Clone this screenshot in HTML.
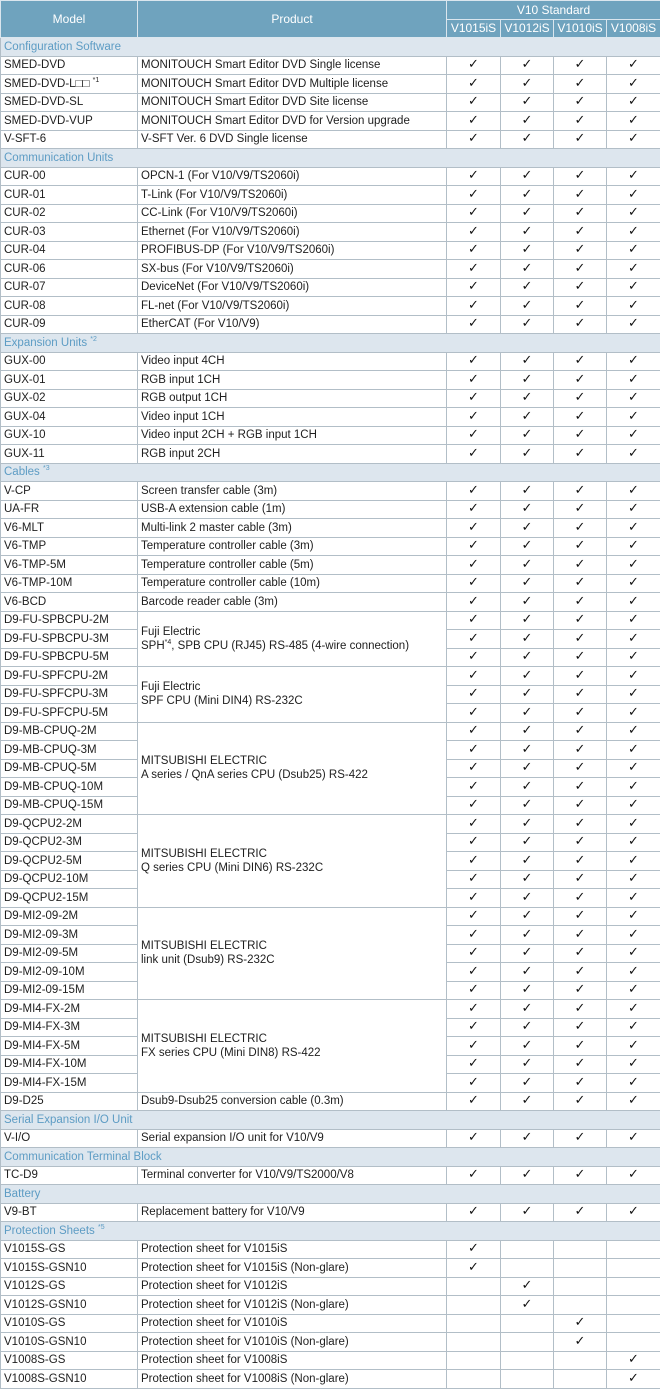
<!DOCTYPE html><html><head><meta charset="utf-8"><style>
body{margin:0;background:#fff;width:660px;height:1389px;overflow:hidden}
table{border-collapse:collapse;table-layout:fixed;width:660px;font-family:"Liberation Sans","DejaVu Sans",sans-serif;font-size:11.5px;color:#1e1e1e}
td,th{border:1px solid #b2bec7;padding:0 0 0 3px;height:17.5px;line-height:16px;white-space:nowrap;overflow:hidden}
th{background:#6fa3be;color:#fff;font-weight:normal;text-align:center;border-color:#dbe6ee;padding:0;font-size:12px}
tr.h td{background:#dde6ee;color:#5d9cc4;}
td.k{text-align:center;padding:0;font-family:"DejaVu Sans",sans-serif;font-size:13px;color:#111}
td.p{line-height:14px}
sup{font-size:7px;line-height:0}
</style></head><body><table>
<colgroup><col style="width:137px"><col style="width:309px"><col style="width:54px"><col style="width:53px"><col style="width:53px"><col style="width:54px"></colgroup>
<tr><th rowspan="2">Model</th><th rowspan="2">Product</th><th colspan="4">V10 Standard</th></tr>
<tr><th>V1015iS</th><th>V1012iS</th><th>V1010iS</th><th>V1008iS</th></tr>
<tr class="h"><td colspan="6">Configuration Software</td></tr>
<tr><td>SMED-DVD</td><td>MONITOUCH Smart Editor DVD Single license</td><td class="k">✓</td><td class="k">✓</td><td class="k">✓</td><td class="k">✓</td></tr>
<tr><td>SMED-DVD-L□□ <sup>*1</sup></td><td>MONITOUCH Smart Editor DVD Multiple license</td><td class="k">✓</td><td class="k">✓</td><td class="k">✓</td><td class="k">✓</td></tr>
<tr><td>SMED-DVD-SL</td><td>MONITOUCH Smart Editor DVD Site license</td><td class="k">✓</td><td class="k">✓</td><td class="k">✓</td><td class="k">✓</td></tr>
<tr><td>SMED-DVD-VUP</td><td>MONITOUCH Smart Editor DVD for Version upgrade</td><td class="k">✓</td><td class="k">✓</td><td class="k">✓</td><td class="k">✓</td></tr>
<tr><td>V-SFT-6</td><td>V-SFT Ver. 6 DVD Single license</td><td class="k">✓</td><td class="k">✓</td><td class="k">✓</td><td class="k">✓</td></tr>
<tr class="h"><td colspan="6">Communication Units</td></tr>
<tr><td>CUR-00</td><td>OPCN-1 (For V10/V9/TS2060i)</td><td class="k">✓</td><td class="k">✓</td><td class="k">✓</td><td class="k">✓</td></tr>
<tr><td>CUR-01</td><td>T-Link (For V10/V9/TS2060i)</td><td class="k">✓</td><td class="k">✓</td><td class="k">✓</td><td class="k">✓</td></tr>
<tr><td>CUR-02</td><td>CC-Link (For V10/V9/TS2060i)</td><td class="k">✓</td><td class="k">✓</td><td class="k">✓</td><td class="k">✓</td></tr>
<tr><td>CUR-03</td><td>Ethernet (For V10/V9/TS2060i)</td><td class="k">✓</td><td class="k">✓</td><td class="k">✓</td><td class="k">✓</td></tr>
<tr><td>CUR-04</td><td>PROFIBUS-DP (For V10/V9/TS2060i)</td><td class="k">✓</td><td class="k">✓</td><td class="k">✓</td><td class="k">✓</td></tr>
<tr><td>CUR-06</td><td>SX-bus (For V10/V9/TS2060i)</td><td class="k">✓</td><td class="k">✓</td><td class="k">✓</td><td class="k">✓</td></tr>
<tr><td>CUR-07</td><td>DeviceNet (For V10/V9/TS2060i)</td><td class="k">✓</td><td class="k">✓</td><td class="k">✓</td><td class="k">✓</td></tr>
<tr><td>CUR-08</td><td>FL-net (For V10/V9/TS2060i)</td><td class="k">✓</td><td class="k">✓</td><td class="k">✓</td><td class="k">✓</td></tr>
<tr><td>CUR-09</td><td>EtherCAT (For V10/V9)</td><td class="k">✓</td><td class="k">✓</td><td class="k">✓</td><td class="k">✓</td></tr>
<tr class="h"><td colspan="6">Expansion Units <sup>*2</sup></td></tr>
<tr><td>GUX-00</td><td>Video input 4CH</td><td class="k">✓</td><td class="k">✓</td><td class="k">✓</td><td class="k">✓</td></tr>
<tr><td>GUX-01</td><td>RGB input 1CH</td><td class="k">✓</td><td class="k">✓</td><td class="k">✓</td><td class="k">✓</td></tr>
<tr><td>GUX-02</td><td>RGB output 1CH</td><td class="k">✓</td><td class="k">✓</td><td class="k">✓</td><td class="k">✓</td></tr>
<tr><td>GUX-04</td><td>Video input 1CH</td><td class="k">✓</td><td class="k">✓</td><td class="k">✓</td><td class="k">✓</td></tr>
<tr><td>GUX-10</td><td>Video input 2CH + RGB input 1CH</td><td class="k">✓</td><td class="k">✓</td><td class="k">✓</td><td class="k">✓</td></tr>
<tr><td>GUX-11</td><td>RGB input 2CH</td><td class="k">✓</td><td class="k">✓</td><td class="k">✓</td><td class="k">✓</td></tr>
<tr class="h"><td colspan="6">Cables <sup>*3</sup></td></tr>
<tr><td>V-CP</td><td>Screen transfer cable (3m)</td><td class="k">✓</td><td class="k">✓</td><td class="k">✓</td><td class="k">✓</td></tr>
<tr><td>UA-FR</td><td>USB-A extension cable (1m)</td><td class="k">✓</td><td class="k">✓</td><td class="k">✓</td><td class="k">✓</td></tr>
<tr><td>V6-MLT</td><td>Multi-link 2 master cable (3m)</td><td class="k">✓</td><td class="k">✓</td><td class="k">✓</td><td class="k">✓</td></tr>
<tr><td>V6-TMP</td><td>Temperature controller cable (3m)</td><td class="k">✓</td><td class="k">✓</td><td class="k">✓</td><td class="k">✓</td></tr>
<tr><td>V6-TMP-5M</td><td>Temperature controller cable (5m)</td><td class="k">✓</td><td class="k">✓</td><td class="k">✓</td><td class="k">✓</td></tr>
<tr><td>V6-TMP-10M</td><td>Temperature controller cable (10m)</td><td class="k">✓</td><td class="k">✓</td><td class="k">✓</td><td class="k">✓</td></tr>
<tr><td>V6-BCD</td><td>Barcode reader cable (3m)</td><td class="k">✓</td><td class="k">✓</td><td class="k">✓</td><td class="k">✓</td></tr>
<tr><td>D9-FU-SPBCPU-2M</td><td rowspan="3" class="p">Fuji Electric<br>SPH<sup>*4</sup>, SPB CPU (RJ45) RS-485 (4-wire connection)</td><td class="k">✓</td><td class="k">✓</td><td class="k">✓</td><td class="k">✓</td></tr>
<tr><td>D9-FU-SPBCPU-3M</td><td class="k">✓</td><td class="k">✓</td><td class="k">✓</td><td class="k">✓</td></tr>
<tr><td>D9-FU-SPBCPU-5M</td><td class="k">✓</td><td class="k">✓</td><td class="k">✓</td><td class="k">✓</td></tr>
<tr><td>D9-FU-SPFCPU-2M</td><td rowspan="3" class="p">Fuji Electric<br>SPF CPU (Mini DIN4) RS-232C</td><td class="k">✓</td><td class="k">✓</td><td class="k">✓</td><td class="k">✓</td></tr>
<tr><td>D9-FU-SPFCPU-3M</td><td class="k">✓</td><td class="k">✓</td><td class="k">✓</td><td class="k">✓</td></tr>
<tr><td>D9-FU-SPFCPU-5M</td><td class="k">✓</td><td class="k">✓</td><td class="k">✓</td><td class="k">✓</td></tr>
<tr><td>D9-MB-CPUQ-2M</td><td rowspan="5" class="p">MITSUBISHI ELECTRIC<br>A series / QnA series CPU (Dsub25) RS-422</td><td class="k">✓</td><td class="k">✓</td><td class="k">✓</td><td class="k">✓</td></tr>
<tr><td>D9-MB-CPUQ-3M</td><td class="k">✓</td><td class="k">✓</td><td class="k">✓</td><td class="k">✓</td></tr>
<tr><td>D9-MB-CPUQ-5M</td><td class="k">✓</td><td class="k">✓</td><td class="k">✓</td><td class="k">✓</td></tr>
<tr><td>D9-MB-CPUQ-10M</td><td class="k">✓</td><td class="k">✓</td><td class="k">✓</td><td class="k">✓</td></tr>
<tr><td>D9-MB-CPUQ-15M</td><td class="k">✓</td><td class="k">✓</td><td class="k">✓</td><td class="k">✓</td></tr>
<tr><td>D9-QCPU2-2M</td><td rowspan="5" class="p">MITSUBISHI ELECTRIC<br>Q series CPU (Mini DIN6) RS-232C</td><td class="k">✓</td><td class="k">✓</td><td class="k">✓</td><td class="k">✓</td></tr>
<tr><td>D9-QCPU2-3M</td><td class="k">✓</td><td class="k">✓</td><td class="k">✓</td><td class="k">✓</td></tr>
<tr><td>D9-QCPU2-5M</td><td class="k">✓</td><td class="k">✓</td><td class="k">✓</td><td class="k">✓</td></tr>
<tr><td>D9-QCPU2-10M</td><td class="k">✓</td><td class="k">✓</td><td class="k">✓</td><td class="k">✓</td></tr>
<tr><td>D9-QCPU2-15M</td><td class="k">✓</td><td class="k">✓</td><td class="k">✓</td><td class="k">✓</td></tr>
<tr><td>D9-MI2-09-2M</td><td rowspan="5" class="p">MITSUBISHI ELECTRIC<br>link unit (Dsub9) RS-232C</td><td class="k">✓</td><td class="k">✓</td><td class="k">✓</td><td class="k">✓</td></tr>
<tr><td>D9-MI2-09-3M</td><td class="k">✓</td><td class="k">✓</td><td class="k">✓</td><td class="k">✓</td></tr>
<tr><td>D9-MI2-09-5M</td><td class="k">✓</td><td class="k">✓</td><td class="k">✓</td><td class="k">✓</td></tr>
<tr><td>D9-MI2-09-10M</td><td class="k">✓</td><td class="k">✓</td><td class="k">✓</td><td class="k">✓</td></tr>
<tr><td>D9-MI2-09-15M</td><td class="k">✓</td><td class="k">✓</td><td class="k">✓</td><td class="k">✓</td></tr>
<tr><td>D9-MI4-FX-2M</td><td rowspan="5" class="p">MITSUBISHI ELECTRIC<br>FX series CPU (Mini DIN8) RS-422</td><td class="k">✓</td><td class="k">✓</td><td class="k">✓</td><td class="k">✓</td></tr>
<tr><td>D9-MI4-FX-3M</td><td class="k">✓</td><td class="k">✓</td><td class="k">✓</td><td class="k">✓</td></tr>
<tr><td>D9-MI4-FX-5M</td><td class="k">✓</td><td class="k">✓</td><td class="k">✓</td><td class="k">✓</td></tr>
<tr><td>D9-MI4-FX-10M</td><td class="k">✓</td><td class="k">✓</td><td class="k">✓</td><td class="k">✓</td></tr>
<tr><td>D9-MI4-FX-15M</td><td class="k">✓</td><td class="k">✓</td><td class="k">✓</td><td class="k">✓</td></tr>
<tr><td>D9-D25</td><td>Dsub9-Dsub25 conversion cable (0.3m)</td><td class="k">✓</td><td class="k">✓</td><td class="k">✓</td><td class="k">✓</td></tr>
<tr class="h"><td colspan="6">Serial Expansion I/O Unit</td></tr>
<tr><td>V-I/O</td><td>Serial expansion I/O unit for V10/V9</td><td class="k">✓</td><td class="k">✓</td><td class="k">✓</td><td class="k">✓</td></tr>
<tr class="h"><td colspan="6">Communication Terminal Block</td></tr>
<tr><td>TC-D9</td><td>Terminal converter for V10/V9/TS2000/V8</td><td class="k">✓</td><td class="k">✓</td><td class="k">✓</td><td class="k">✓</td></tr>
<tr class="h"><td colspan="6">Battery</td></tr>
<tr><td>V9-BT</td><td>Replacement battery for V10/V9</td><td class="k">✓</td><td class="k">✓</td><td class="k">✓</td><td class="k">✓</td></tr>
<tr class="h"><td colspan="6">Protection Sheets <sup>*5</sup></td></tr>
<tr><td>V1015S-GS</td><td>Protection sheet for V1015iS</td><td class="k">✓</td><td class="k"></td><td class="k"></td><td class="k"></td></tr>
<tr><td>V1015S-GSN10</td><td>Protection sheet for V1015iS (Non-glare)</td><td class="k">✓</td><td class="k"></td><td class="k"></td><td class="k"></td></tr>
<tr><td>V1012S-GS</td><td>Protection sheet for V1012iS</td><td class="k"></td><td class="k">✓</td><td class="k"></td><td class="k"></td></tr>
<tr><td>V1012S-GSN10</td><td>Protection sheet for V1012iS (Non-glare)</td><td class="k"></td><td class="k">✓</td><td class="k"></td><td class="k"></td></tr>
<tr><td>V1010S-GS</td><td>Protection sheet for V1010iS</td><td class="k"></td><td class="k"></td><td class="k">✓</td><td class="k"></td></tr>
<tr><td>V1010S-GSN10</td><td>Protection sheet for V1010iS (Non-glare)</td><td class="k"></td><td class="k"></td><td class="k">✓</td><td class="k"></td></tr>
<tr><td>V1008S-GS</td><td>Protection sheet for V1008iS</td><td class="k"></td><td class="k"></td><td class="k"></td><td class="k">✓</td></tr>
<tr><td>V1008S-GSN10</td><td>Protection sheet for V1008iS (Non-glare)</td><td class="k"></td><td class="k"></td><td class="k"></td><td class="k">✓</td></tr>
</table></body></html>
